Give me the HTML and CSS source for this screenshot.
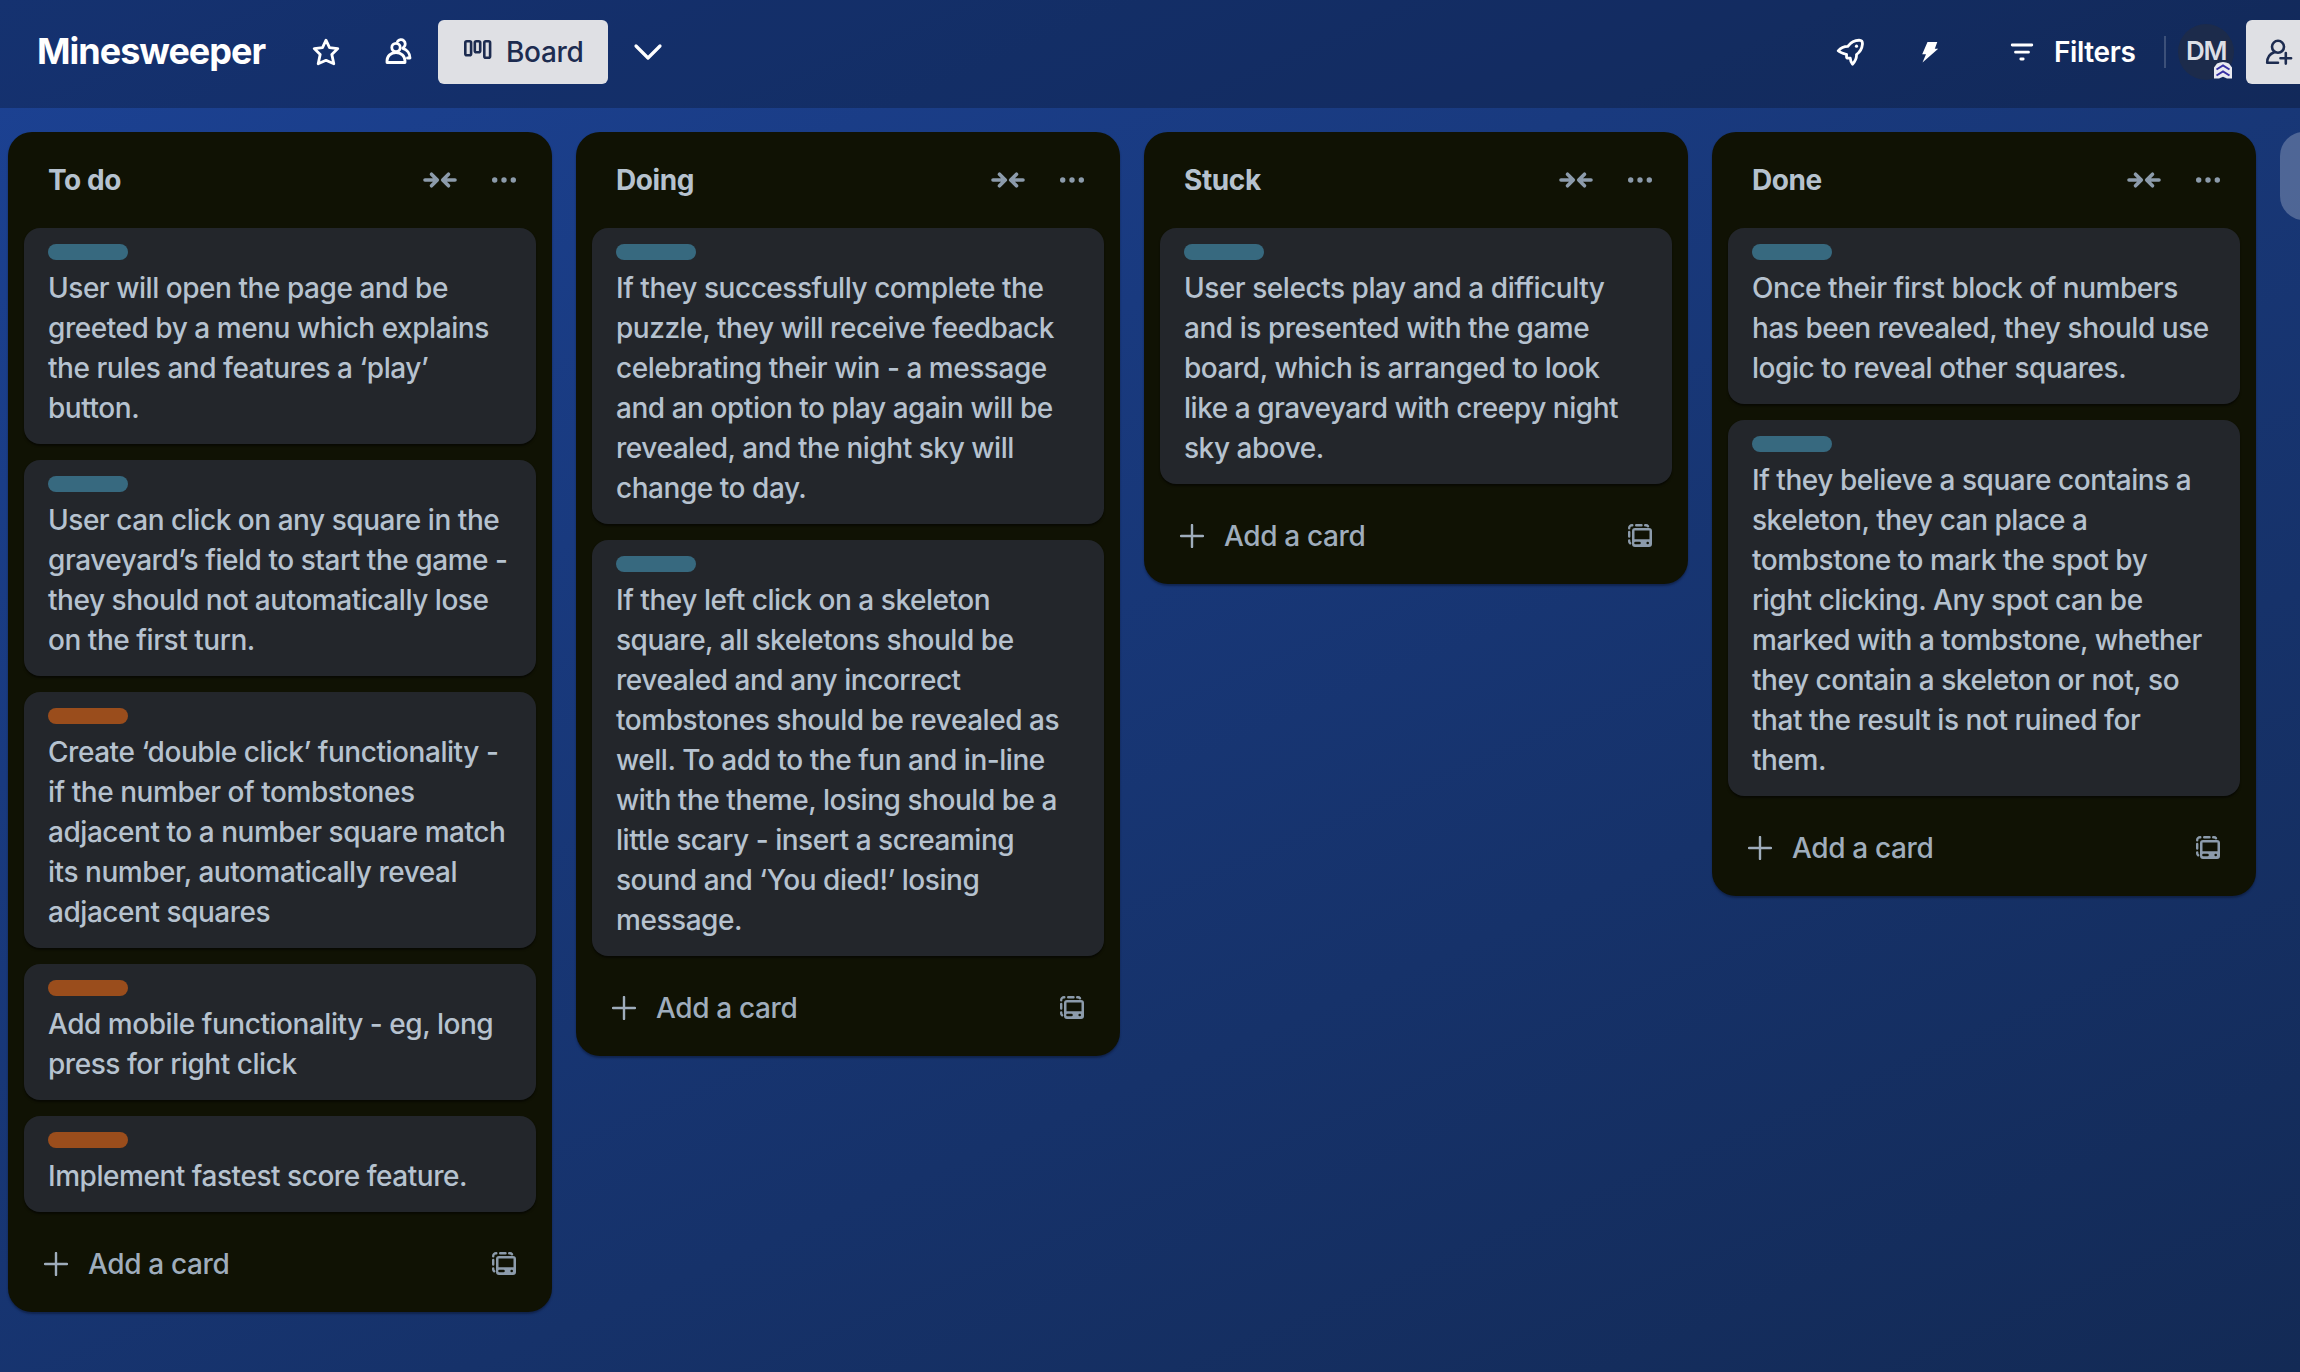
FILE: index.html
```html
<!DOCTYPE html>
<html lang="en">
<head>
<meta charset="utf-8">
<title>Minesweeper</title>
<link rel="stylesheet" href="styles.css">
</head>
<body>
<svg class="defs" width="0" height="0" aria-hidden="true">
  <symbol id="collapse" viewBox="0 0 36 18"><path d="M3 9h12M9.500 3.200 15.300 9l-5.800 5.800M33 9H21M26.500 3.200 20.700 9l5.800 5.800" fill="none" stroke="currentColor" stroke-width="3.600" stroke-linecap="round" stroke-linejoin="round"/></symbol>
  <symbol id="more" viewBox="0 0 24 6"><circle cx="2.700" cy="3" r="2.700"/><circle cx="12" cy="3" r="2.700"/><circle cx="21.300" cy="3" r="2.700"/></symbol>
  <symbol id="plus" viewBox="0 0 24 24"><path d="M12 1v22M1 12h22" fill="none" stroke="currentColor" stroke-width="2.400" stroke-linecap="round"/></symbol>
  <symbol id="template" viewBox="0 0 24 24"><path d="M1.200 4.200V4a2.800 2.800 0 0 1 2.800-2.800h.3M8.200 1.200h5.300M17.200 1.200h.8a2.500 2.500 0 0 1 2 1M1.200 8v4.500M1.200 16.500v.8a2.500 2.500 0 0 0 1 2" fill="none" stroke="currentColor" stroke-width="2.400" stroke-linecap="round"/><path fill-rule="evenodd" d="M7 4h14a3 3 0 0 1 3 3v13a3 3 0 0 1-3 3H7a3 3 0 0 1-3-3V7a3 3 0 0 1 3-3Zm-.5 2.400v8.800h15V6.400ZM7.500 17.700a1.300 1.300 0 0 0 0 2.600h4a1.300 1.300 0 0 0 0-2.600Zm12.200 0a1.300 1.300 0 1 0 0 2.600 1.300 1.300 0 0 0 0-2.600Z"/></symbol>
</svg>

<header class="board-header">
  <h1 class="board-name">Minesweeper</h1>
  <svg class="icon star" viewBox="0 0 28 28"><path d="M14 2.200l3.500 7.400 8.300 1-6 5.800 2 9.400L14 22.300l-7.800 3.500 2-9.400-6-5.800 8.300-1z"/></svg>
  <svg class="icon people" viewBox="0 0 28 28"><circle cx="11" cy="9.500" r="4.200"/><path d="M2 24.500v-1.500c0-5 4-8.500 9-8.500s9 3.500 9 8.500v1.500zM12.500 3.500c1.500-2.200 4.500-2.500 6.300-.8 1.800 1.700 1.900 4.600.2 6.300l-1.200 1.300c4 1.200 7.200 5 7.200 9.700h-2.500"/></svg>
  <div class="view-button">
    <svg class="board-icon" viewBox="0 0 28 20"><rect x="1.300" y="1.300" width="5.800" height="14" rx="1.500"/><rect x="10.800" y="1.300" width="5.400" height="11" rx="1.500"/><rect x="20.300" y="1.300" width="5.800" height="16.500" rx="1.500"/></svg>
    <span class="board-label">Board</span>
  </div>
  <svg class="icon chevron" viewBox="0 0 30 18"><path d="M3 3l12 12L27 3"/></svg>
  <div class="header-tools">
    <svg class="icon rocket" viewBox="0 0 28 28"><path d="M2.200 12.800C5 9.500 8.200 8.300 11.800 8.300 14.500 4.800 19 1.900 24.200 2.300c2.200.2 2.400 1.800 2.200 4-.4 4.500-2.400 7.600-5.900 10.200.3 3.800-1.500 6.800-3.900 9.700-1.600-1.700-2.200-3.600-2.300-6-.8-.2-2.900.3-3.500-.4-.6-.6 0-2.600-.3-3.400-3-.8-6-1.500-8.300-3.600Z"/><circle class="dot" cx="20.500" cy="8.200" r="1.600"/></svg>
    <svg class="bolt" viewBox="0 0 18 22"><path d="M6.500 1H16.300L13.800 7.800h3.400L1.500 21.500 5 13.200H1.200Z"/></svg>
    <svg class="icon filter" viewBox="0 0 24 20"><path d="M2.200 3h19.600M5.500 10.200h13M10.800 17h2.400"/></svg>
    <span class="filter-label">Filters</span>
    <span class="divider"></span>
    <div class="avatar"><span class="initials">DM</span>
      <svg class="badge" viewBox="0 0 18 17"><path class="badge-bg" d="M0 5.500 3 1.500Q9-1.500 15 1.500L18 5.500V16.500H13L9 14.800 5 16.500H0Z"/><path class="badge-mark" d="M2.500 7.500 9 3.500l6.500 4M2.500 13.500 9 9.500l6.500 4"/></svg>
    </div>
    <div class="share">
      <svg class="share-icon" viewBox="0 0 28 26"><circle cx="13" cy="7.800" r="6"/><path d="M13 23.800H2.200c0-5 2.700-9 7-10.500M20.800 14v10.600M15.500 19.300h10.600"/></svg>
    </div>
  </div>
</header>

<main class="board">
  <section class="list">
    <div class="list-head"><h2>To do</h2><svg class="collapse"><use href="#collapse"/></svg><svg class="more"><use href="#more"/></svg></div>
    <div class="cards">
      <article class="card"><i class="tag sky"></i><p>User will open the page and be<br>greeted by a menu which explains<br>the rules and features a ‘play’<br>button.</p></article>
      <article class="card"><i class="tag sky"></i><p>User can click on any square in the<br>graveyard’s field to start the game -<br>they should not automatically lose<br>on the first turn.</p></article>
      <article class="card"><i class="tag orange"></i><p>Create ‘double click’ functionality -<br>if the number of tombstones<br>adjacent to a number square match<br>its number, automatically reveal<br>adjacent squares</p></article>
      <article class="card"><i class="tag orange"></i><p>Add mobile functionality - eg, long<br>press for right click</p></article>
      <article class="card"><i class="tag orange"></i><p>Implement fastest score feature.</p></article>
    </div>
    <div class="list-foot"><svg class="plus"><use href="#plus"/></svg><span>Add a card</span><svg class="template"><use href="#template"/></svg></div>
  </section>

  <section class="list">
    <div class="list-head"><h2>Doing</h2><svg class="collapse"><use href="#collapse"/></svg><svg class="more"><use href="#more"/></svg></div>
    <div class="cards">
      <article class="card"><i class="tag sky"></i><p>If they successfully complete the<br>puzzle, they will receive feedback<br>celebrating their win - a message<br>and an option to play again will be<br>revealed, and the night sky will<br>change to day.</p></article>
      <article class="card"><i class="tag sky"></i><p>If they left click on a skeleton<br>square, all skeletons should be<br>revealed and any incorrect<br>tombstones should be revealed as<br>well. To add to the fun and in-line<br>with the theme, losing should be a<br>little scary - insert a screaming<br>sound and ‘You died!’ losing<br>message.</p></article>
    </div>
    <div class="list-foot"><svg class="plus"><use href="#plus"/></svg><span>Add a card</span><svg class="template"><use href="#template"/></svg></div>
  </section>

  <section class="list">
    <div class="list-head"><h2>Stuck</h2><svg class="collapse"><use href="#collapse"/></svg><svg class="more"><use href="#more"/></svg></div>
    <div class="cards">
      <article class="card"><i class="tag sky"></i><p>User selects play and a difficulty<br>and is presented with the game<br>board, which is arranged to look<br>like a graveyard with creepy night<br>sky above.</p></article>
    </div>
    <div class="list-foot"><svg class="plus"><use href="#plus"/></svg><span>Add a card</span><svg class="template"><use href="#template"/></svg></div>
  </section>

  <section class="list">
    <div class="list-head"><h2>Done</h2><svg class="collapse"><use href="#collapse"/></svg><svg class="more"><use href="#more"/></svg></div>
    <div class="cards">
      <article class="card"><i class="tag sky"></i><p>Once their first block of numbers<br>has been revealed, they should use<br>logic to reveal other squares.</p></article>
      <article class="card"><i class="tag sky"></i><p>If they believe a square contains a<br>skeleton, they can place a<br>tombstone to mark the spot by<br>right clicking. Any spot can be<br>marked with a tombstone, whether<br>they contain a skeleton or not, so<br>that the result is not ruined for<br>them.</p></article>
    </div>
    <div class="list-foot"><svg class="plus"><use href="#plus"/></svg><span>Add a card</span><svg class="template"><use href="#template"/></svg></div>
  </section>

  <div class="add-list"></div>
</main>
</body>
</html>
```
FILE: styles.css
```css
* { box-sizing: border-box; }
html, body { height: 100%; }
body {
  margin: 0;
  overflow: hidden;
  display: flex;
  flex-direction: column;
  font-family: Inter, "Liberation Sans", sans-serif;
  font-size: 28px;
  line-height: 40px;
  color: #b6c2cf;
  background: linear-gradient(157deg, #1c4294, #132a55);
}
h1, h2, p { margin: 0; }
svg { display: block; flex: none; fill: currentColor; }
.defs { position: absolute; }

/* Header */
.board-header {
  flex: none;
  height: 108px;
  padding: 0 0 4px 37px;
  display: flex;
  align-items: center;
  color: #fff;
  background: rgba(0, 0, 0, 0.24);
  white-space: nowrap;
}
.board-name {
  width: 275px;
  margin-top: -2px;
  font-size: 36px;
  font-weight: 700;
  letter-spacing: -1px;
}
.icon { fill: none; stroke: currentColor; stroke-width: 2.8; stroke-linejoin: round; stroke-linecap: round; }
.star { width: 28px; height: 28px; }
.people { width: 28px; height: 28px; margin-left: 45px; }
.view-button {
  width: 170px;
  height: 64px;
  margin-left: 25px;
  padding-left: 26px;
  display: flex;
  align-items: center;
  border-radius: 6px;
  color: #1d2c50;
  background: #dfe0e4;
}
.board-icon { width: 28px; height: 20px; margin-bottom: 5px; fill: none; stroke: currentColor; stroke-width: 2.6; }
.board-label { margin-left: 14px; font-weight: 500; letter-spacing: -0.3px; }
.chevron { width: 30px; height: 18px; margin-left: 25px; stroke-width: 3.2; }
.header-tools { display: flex; align-items: center; margin-left: auto; }
.rocket { width: 28px; height: 28px; }
.dot { fill: currentColor; stroke: none; }
.bolt { width: 18px; height: 22px; margin-left: 57px; }
.filter { width: 24px; height: 20px; margin-left: 71px; }
.filter-label { width: 110px; margin-left: 20px; font-weight: 600; letter-spacing: -0.4px; }
.divider { width: 2px; height: 32px; background: rgba(255, 255, 255, 0.18); }
.avatar {
  position: relative;
  width: 56px;
  height: 56px;
  margin-left: 12px;
  border-radius: 50%;
  background: #1c2b4b;
  text-align: center;
}
.initials { display: block; font-size: 26px; font-weight: 600; line-height: 54px; letter-spacing: -1.4px; color: #dcdfe6; }
.badge { position: absolute; left: 36px; top: 38px; width: 18px; height: 17px; }
.badge-bg { fill: #e9eaf0; }
.badge-mark { fill: none; stroke: #3730a3; stroke-width: 2; }
.share {
  width: 54px;
  height: 64px;
  margin-left: 12px;
  padding: 19px 0 0 19px;
  overflow: hidden;
  border-radius: 6px 0 0 6px;
  background: #dfe0e4;
}
.share-icon { width: 28px; height: 26px; fill: none; stroke: #1d2c50; stroke-width: 2.6; stroke-linecap: round; stroke-linejoin: round; }

/* Lists */
.board { flex: 1; display: flex; align-items: flex-start; gap: 24px; padding: 24px 0 0 8px; overflow: hidden; }
.list {
  flex: none;
  width: 544px;
  padding: 0 16px;
  border-radius: 24px;
  background: #101204;
  box-shadow: 0 2px 2px rgba(9, 20, 45, 0.5);
}
.list-head { height: 96px; padding: 0 20px 0 24px; display: flex; align-items: center; color: #8c9bab; }
.list-head h2 { flex: 1; font-size: 28px; font-weight: 650; letter-spacing: -0.4px; color: #b6c2cf; }
.collapse { width: 36px; height: 18px; }
.more { width: 24px; height: 6px; margin-left: 34px; }
.cards { display: flex; flex-direction: column; gap: 16px; }
.card {
  padding: 16px 0 16px 24px;
  border-radius: 16px;
  background: #23262b;
  box-shadow: 0 2px 2px rgba(0, 0, 0, 0.5);
}
.card p { white-space: nowrap; font-weight: 450; letter-spacing: -0.46px; }
.tag { display: block; width: 80px; height: 16px; margin-bottom: 8px; border-radius: 8px; }
.sky { background: #37697f; }
.orange { background: #9a4d1c; }
.list-foot { height: 100px; padding: 4px 20px 0; display: flex; align-items: center; color: #9fadbc; font-weight: 500; }
.list-foot span { flex: 1; margin-left: 20px; letter-spacing: -0.35px; }
.plus { width: 24px; height: 24px; }
.template { width: 24px; height: 24px; color: #8c9bab; }
.add-list { flex: none; width: 544px; height: 88px; border-radius: 24px; background: rgba(255, 255, 255, 0.24); }
```
